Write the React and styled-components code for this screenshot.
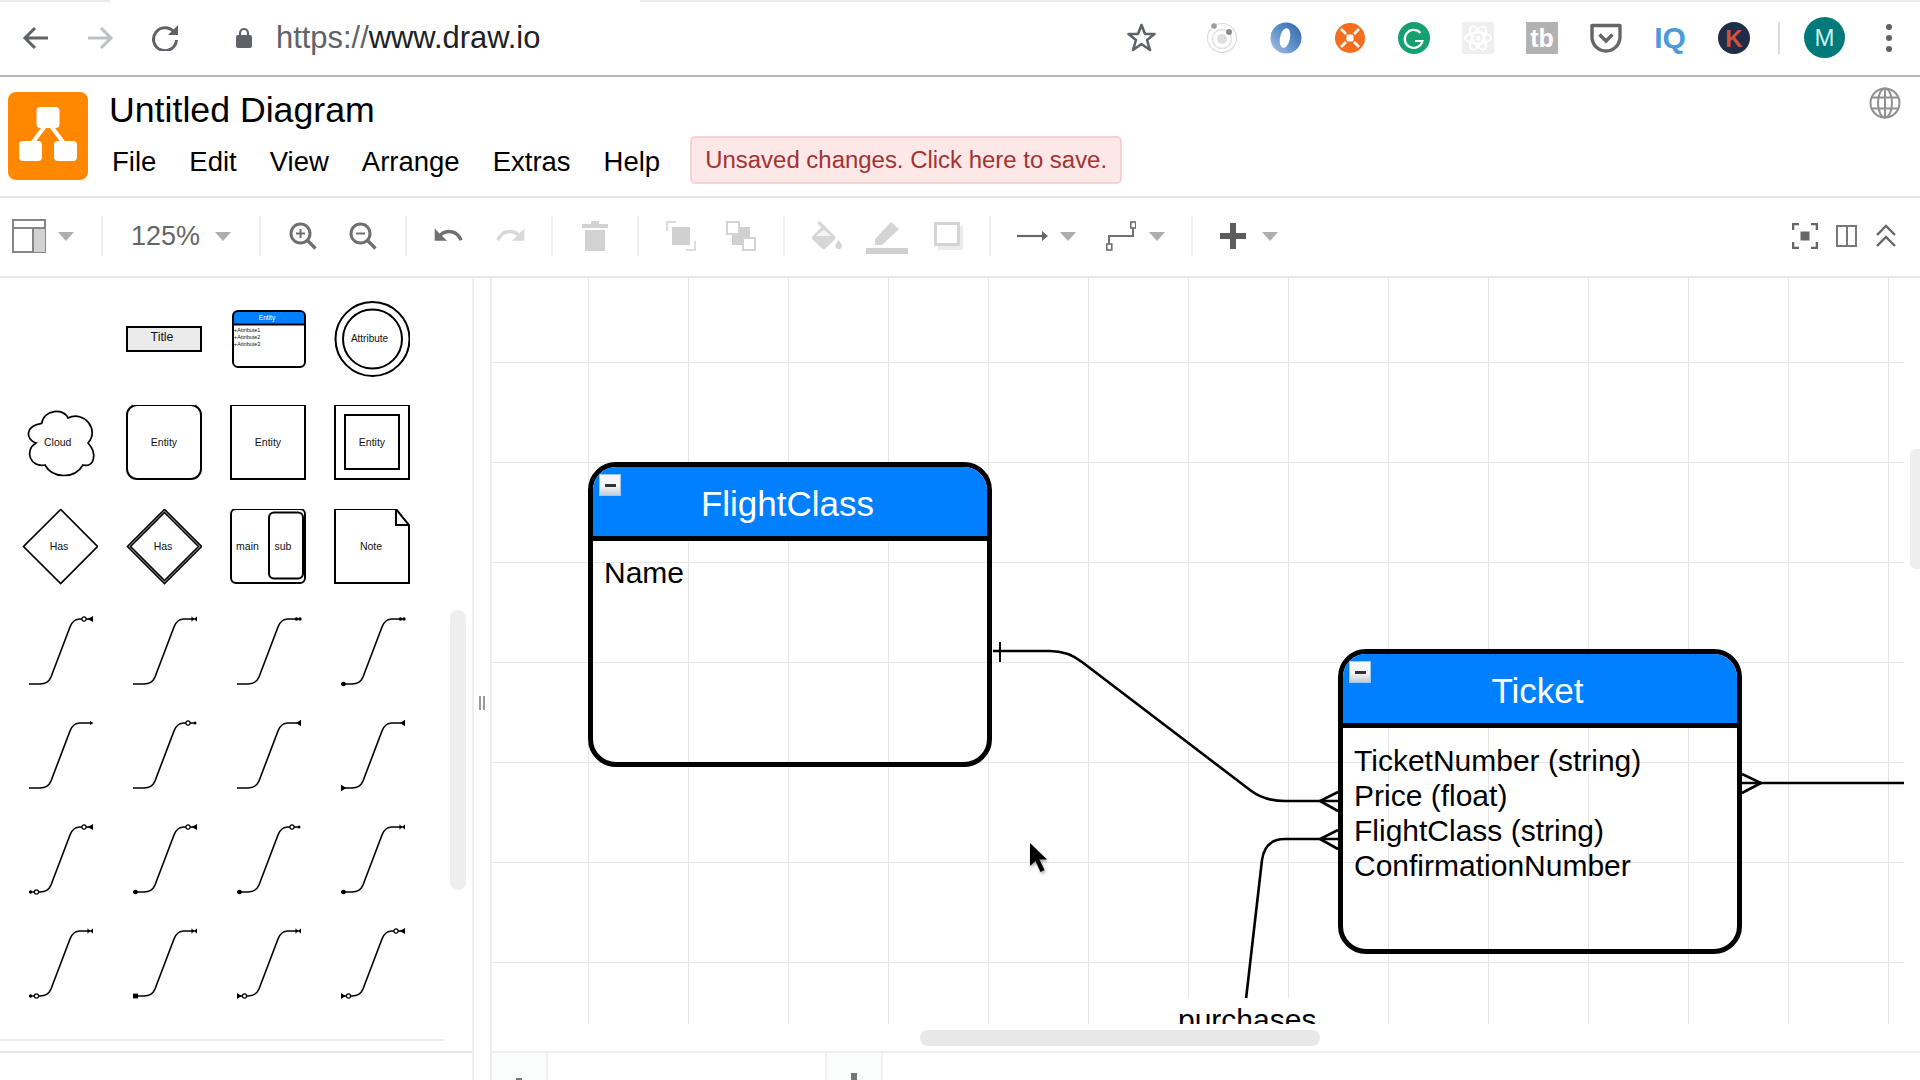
import React from "react";
import styled, { createGlobalStyle } from "styled-components";

const GlobalStyle = createGlobalStyle`
  html, body {
    margin: 0;
    padding: 0;
    background: #ffffff;
    font-family: "Liberation Sans", Arial, sans-serif;
  }
`;

const SHAPE_FONT = "Liberation Sans, Arial, sans-serif";

/* browser chrome */
const Page = styled.div`
  width: 1920px;
  height: 1080px;
  overflow: hidden;
  display: flex;
  flex-direction: column;
  background: #ffffff;
`;

const TabStrip = styled.div`
  height: 2px;
  background: #e8eaed;
  padding-left: 110px;
`;

const ActiveTab = styled.div`
  width: 530px;
  height: 2px;
  background: #ffffff;
`;

const BrowserBar = styled.div`
  height: 75px;
  box-sizing: border-box;
  border-bottom: 2px solid #b8b8b8;
  display: flex;
  align-items: center;
  padding: 0 28px 2px 22px;
`;

const NavIcon = styled.svg`
  display: block;
  flex: none;
  margin-left: ${(p) => p.$ml || 0}px;
`;

const Url = styled.div`
  margin-left: 24px;
  font-size: 30.9px;
  color: #5f6368;
  white-space: nowrap;
`;

const UrlHost = styled.span`
  color: #202124;
`;

const Extensions = styled.div`
  margin-left: auto;
  display: flex;
  align-items: center;
`;

const ExtIcon = styled.svg`
  display: block;
  flex: none;
  width: 32px;
  height: 32px;
  margin-left: 32px;
`;

const ChromeSep = styled.div`
  width: 2px;
  height: 32px;
  background: #dadce0;
  margin-left: 28px;
`;

const Avatar = styled.div`
  width: 41px;
  height: 41px;
  border-radius: 50%;
  background: #00797a;
  color: #c9f0ee;
  font-size: 24px;
  display: flex;
  align-items: center;
  justify-content: center;
  margin-left: 24px;
`;

const Dots = styled.div`
  display: flex;
  flex-direction: column;
  gap: 5px;
  margin-left: 41px;
`;

const Dot = styled.div`
  width: 6px;
  height: 6px;
  border-radius: 50%;
  background: #5f6368;
`;

/* draw.io header */
const AppHeader = styled.div`
  height: 121px;
  box-sizing: border-box;
  border-bottom: 2px solid #e4e4e4;
  display: flex;
  align-items: flex-start;
  padding: 10px 19px 0 8px;
`;

const Logo = styled.svg`
  display: block;
  flex: none;
  width: 80px;
  height: 88px;
  margin-top: 5px;
`;

const TitleBlock = styled.div`
  margin-left: 21px;
  margin-top: 3px;
`;

const DocTitle = styled.div`
  font-size: 35.7px;
  line-height: 40px;
  color: #000000;
  white-space: nowrap;
`;

const MenuRow = styled.div`
  display: flex;
  align-items: center;
  gap: 33px;
  margin-top: 6px;
  padding-left: 3px;
`;

const MenuItem = styled.div`
  font-size: 27.5px;
  line-height: 32px;
  padding-top: 4px;
  color: #000000;
`;

const SaveBanner = styled.div`
  width: 432px;
  height: 48px;
  box-sizing: border-box;
  margin-left: -3px;
  background: #fde8e7;
  border: 2px solid #f6d3d2;
  border-radius: 5px;
  color: #a33232;
  font-size: 23.95px;
  display: flex;
  align-items: center;
  justify-content: center;
  white-space: nowrap;
`;

const Globe = styled.svg`
  display: block;
  flex: none;
  margin-left: auto;
`;

/* toolbar */
const Toolbar = styled.div`
  height: 80px;
  box-sizing: border-box;
  border-bottom: 2px solid #e8e8e8;
  padding-bottom: 2px;
  display: flex;
  align-items: center;
`;

const ToolGroup = styled.div`
  width: ${(p) => p.$w}px;
  flex: none;
  display: flex;
  align-items: center;
  justify-content: ${(p) => (p.$start ? "flex-start" : "center")};
  gap: ${(p) => p.$gap || 0}px;
  padding-left: ${(p) => p.$pl || 0}px;
  box-sizing: border-box;
`;

const ToolSep = styled.div`
  width: 2px;
  height: 40px;
  flex: none;
  background: #eeeeee;
`;

const ToolIcon = styled.svg`
  display: block;
  flex: none;
  margin-left: ${(p) => p.$ml || 0}px;
`;

const ZoomLabel = styled.div`
  font-size: 27px;
  color: #666666;
`;

const ToolRight = styled.div`
  margin-left: auto;
  padding-right: 23px;
  display: flex;
  align-items: center;
  gap: 18px;
`;

/* body */
const Main = styled.div`
  flex: 1;
  display: flex;
  min-height: 0;
`;

const Sidebar = styled.div`
  width: 474px;
  flex: none;
  box-sizing: border-box;
  border-right: 2px solid #eeeeee;
  display: flex;
  flex-direction: column;
  position: relative;
`;

const ShapeGrid = styled.div`
  flex: 1;
  display: grid;
  grid-template-columns: repeat(4, 104px);
  grid-auto-rows: 104px;
  padding: 23px 0 0 22px;
`;

const ShapeSvg = styled.svg`
  display: block;
  width: 76px;
  height: 76px;
`;

const SideScroll = styled.div`
  position: absolute;
  left: 450px;
  top: 332px;
  width: 16px;
  height: 280px;
  border-radius: 8px;
  background: #eeeeee;
`;

const RuleShort = styled.div`
  width: 444px;
  height: 2px;
  background: #eeeeee;
  margin-bottom: 10px;
`;

const RuleFull = styled.div`
  height: 2px;
  background: #e8e8e8;
  margin-bottom: 27px;
`;

const Splitter = styled.div`
  width: 16px;
  flex: none;
  box-sizing: border-box;
  padding-top: 418px;
  display: flex;
  justify-content: center;
  gap: 2px;
`;

const Grip = styled.div`
  width: 2px;
  height: 14px;
  background: #9a9a9a;
`;

const Workspace = styled.div`
  flex: 1;
  min-width: 0;
  border-left: 2px solid #eeeeee;
  display: flex;
  flex-direction: column;
`;

const CanvasRow = styled.div`
  height: 746px;
  display: flex;
`;

const Canvas = styled.div`
  width: 1412px;
  height: 746px;
  flex: none;
  position: relative;
  overflow: hidden;
  background-color: #ffffff;
  background-image: linear-gradient(to right, #e6e6e6 1px, transparent 1px),
    linear-gradient(to bottom, #e6e6e6 1px, transparent 1px);
  background-size: 100px 100px;
  background-position: 96px 84px;
`;

const VScrollTrack = styled.div`
  flex: 1;
  padding-top: 171px;
  display: flex;
  justify-content: flex-end;
`;

const VThumb = styled.div`
  width: 10px;
  height: 120px;
  background: #eeeeee;
  border-radius: 6px 0 0 6px;
`;

const HScrollTrack = styled.div`
  height: 27px;
  box-sizing: border-box;
  padding: 6px 0 0 428px;
`;

const HThumb = styled.div`
  width: 400px;
  height: 16px;
  border-radius: 8px;
  background: #e8e8e8;
`;

const TabBar = styled.div`
  flex: 1;
  border-top: 2px solid #eeeeee;
  display: flex;
  background: #ffffff;
`;

const TabCell = styled.div`
  width: ${(p) => p.$w}px;
  flex: none;
  box-sizing: border-box;
  background: ${(p) => (p.$tinted ? "#fbfcfc" : "#ffffff")};
  border-right: ${(p) => (p.$tinted ? "2px solid #eef0f0" : "none")};
  border-left: ${(p) => (p.$left ? "2px solid #eef0f0" : "none")};
  display: flex;
  justify-content: center;
  align-items: flex-end;
`;

const TabGlyph = styled.div`
  width: 6px;
  height: ${(p) => p.$h}px;
  background: #777777;
`;

/* diagram */
const Links = styled.svg`
  position: absolute;
  left: 0;
  top: 0;
  width: 1412px;
  height: 746px;
`;

const Entity = styled.div`
  position: absolute;
  left: ${(p) => p.$x}px;
  top: ${(p) => p.$y}px;
  width: 404px;
  height: 305px;
  box-sizing: border-box;
  border: 5px solid #000000;
  border-radius: 28px;
  overflow: hidden;
`;

const EntityHead = styled.div`
  height: 74px;
  box-sizing: border-box;
  border-bottom: 5px solid #000000;
  background: #0080ff;
  color: #ffffff;
  font-size: 35px;
  padding: 4px 5px 0 0;
  display: flex;
  align-items: center;
  justify-content: center;
  position: relative;
`;

const Collapse = styled.div`
  position: absolute;
  left: 6px;
  top: 7px;
  width: 22px;
  height: 22px;
  box-sizing: border-box;
  border: 1px solid #9cc6ee;
  background: linear-gradient(#f4f6f8 55%, #c3ccd6);
  display: flex;
  align-items: center;
  justify-content: center;
`;

const CollapseBar = styled.div`
  width: 11px;
  height: 3px;
  background: #333333;
`;

const EntityBody = styled.div`
  padding: ${(p) => p.$top}px 0 0 11px;
  font-size: 30px;
  line-height: 35px;
  color: #000000;
  white-space: nowrap;
`;

const LinkLabel = styled.div`
  position: absolute;
  left: 686px;
  top: 720px;
  padding-top: 4px;
  background: #ffffff;
  font-size: 30px;
  line-height: 35px;
  color: #000000;
`;

const Pointer = styled.svg`
  position: absolute;
  left: 537px;
  top: 564px;
  filter: drop-shadow(1px 2px 1.5px rgba(0, 0, 0, 0.35));
`;

const Caret = ({ ml }) => (
  <ToolIcon $ml={ml} width="16" height="9" viewBox="0 0 16 9">
    <path d="M0 0H16L8 9Z" fill="#adadad" />
  </ToolIcon>
);

const endMarks = {
  tip: <path d="M68 4L71.5 6L68 8Z" />,
  tri: <path d="M66 6L71 2.8V9.2Z" />,
  bow: <path d="M65.5 3.2L71 8.8V3.2L65.5 8.8Z" />,
  dd: (
    <>
      <circle cx="66.5" cy="6" r="1.7" />
      <circle cx="70" cy="6" r="1.7" />
    </>
  ),
  circTri: (
    <>
      <circle cx="62" cy="6" r="2.1" fill="#fff" stroke="#000" strokeWidth="1.2" />
      <path d="M65.5 6L71 3V9Z" />
    </>
  ),
  circTip: (
    <>
      <circle cx="62" cy="6" r="2.1" fill="#fff" stroke="#000" strokeWidth="1.2" />
      <circle cx="69" cy="6" r="1.5" />
    </>
  ),
};

const startMarks = {
  dot: <circle cx="9.5" cy="71" r="2.3" />,
  block: <rect x="7" y="68.6" width="5" height="4.8" />,
  tri: <path d="M7 67.8L12.5 71L7 74.2Z" />,
  tipCirc: (
    <>
      <circle cx="8.5" cy="71" r="1.7" />
      <circle cx="14.5" cy="71" r="2.1" fill="#fff" stroke="#000" strokeWidth="1.2" />
    </>
  ),
  triCirc: (
    <>
      <path d="M7 68L11.5 71L7 74Z" />
      <circle cx="14.5" cy="71" r="2.1" fill="#fff" stroke="#000" strokeWidth="1.2" />
    </>
  ),
};

const connectors = [
  ["", "circTri"],
  ["", "bow"],
  ["", "dd"],
  ["dot", "dd"],
  ["", "tip"],
  ["", "circTip"],
  ["", "tri"],
  ["tri", "tri"],
  ["tipCirc", "circTri"],
  ["dot", "circTri"],
  ["dot", "circTip"],
  ["dot", "bow"],
  ["tipCirc", "bow"],
  ["block", "bow"],
  ["triCirc", "bow"],
  ["triCirc", "circTri"],
];

const Connector = ({ start, end }) => (
  <ShapeSvg viewBox="0 0 76 76">
    <path d="M7 71H18Q26 71 29 64L48 14Q51 6 58 6H70" fill="none" stroke="#000" strokeWidth="1.6" />
    {startMarks[start]}
    {endMarks[end]}
  </ShapeSvg>
);

const Label = ({ x, y, size = 10.5, fill = "#111", children, anchor = "middle" }) => (
  <text x={x} y={y} fontSize={size} fill={fill} textAnchor={anchor} fontFamily={SHAPE_FONT}>
    {children}
  </text>
);

const line = { fill: "none", stroke: "#000", strokeWidth: 2 };

// rows two and three sit one pixel higher than the grid pitch gives
const RAISED = "0 1 76 76";

const Shapes = () => (
  <>
    <ShapeSvg viewBox="0 0 76 76" />
    <ShapeSvg viewBox="0 0 76 76">
      <rect x="1" y="26" width="74" height="24" fill="#ebebeb" stroke="#000" strokeWidth="2" />
      <Label x="36" y="40" size={12.3}>Title</Label>
    </ShapeSvg>
    <ShapeSvg viewBox="0 0 76 76">
      <path d="M3 23V14Q3 10 8 10H70Q75 10 75 14V23Z" fill="#0080ff" />
      <rect x="3" y="10" width="72" height="56" rx="5" {...line} />
      <path d="M3 23.5H75" {...line} />
      <Label x="37" y="18.5" size={6.6} fill="#fff">Entity</Label>
      <Label x="4" y="31" size={5.4} anchor="start">+Attribute1</Label>
      <Label x="4" y="38" size={5.4} anchor="start">+Attribute2</Label>
      <Label x="4" y="44.5" size={5.4} anchor="start">+Attribute3</Label>
    </ShapeSvg>
    <ShapeSvg viewBox="0 0 76 76">
      <circle cx="38.5" cy="38" r="37" {...line} />
      <circle cx="38.5" cy="38" r="29.5" {...line} />
      <Label x="35.5" y="41" size={10}>Attribute</Label>
    </ShapeSvg>

    <ShapeSvg viewBox={RAISED}>
      <path
        d="M14 39C4 36 2 22 19.7 19.3C22 5 42 4 46 14C62 6 78 26 66 39C76 50 72 64 61 61C52 76 30 74 23 61C8 64 2 46 14 39Z"
        {...line}
        strokeWidth="1.7"
      />
      <Label x="35.7" y="42">Cloud</Label>
    </ShapeSvg>
    <ShapeSvg viewBox={RAISED}>
      <rect x="1" y="1" width="74" height="74" rx="10" {...line} />
      <Label x="38" y="42">Entity</Label>
    </ShapeSvg>
    <ShapeSvg viewBox={RAISED}>
      <rect x="1" y="1" width="74" height="74" {...line} />
      <Label x="38" y="42">Entity</Label>
    </ShapeSvg>
    <ShapeSvg viewBox={RAISED}>
      <rect x="1" y="1" width="74" height="74" {...line} />
      <rect x="11" y="11" width="54" height="54" {...line} />
      <Label x="38" y="42">Entity</Label>
    </ShapeSvg>

    <ShapeSvg viewBox={RAISED}>
      <path d="M38.7 1.5L75.5 38.5L38.7 75.5L1.5 38.5Z" {...line} strokeWidth="1.7" />
      <Label x="37" y="42">Has</Label>
    </ShapeSvg>
    <ShapeSvg viewBox={RAISED}>
      <path d="M38.5 1.5L75.5 38.5L38.5 75.5L1.5 38.5Z" {...line} strokeWidth="1.7" />
      <path d="M38.5 4.5L72.5 38.5L38.5 72.5L4.5 38.5Z" {...line} strokeWidth="1.7" />
      <Label x="37" y="42">Has</Label>
    </ShapeSvg>
    <ShapeSvg viewBox={RAISED}>
      <rect x="1" y="1" width="74" height="74" rx="5" {...line} />
      <rect x="39" y="4.5" width="34" height="66" rx="5" {...line} />
      <Label x="17.5" y="42">main</Label>
      <Label x="53" y="42">sub</Label>
    </ShapeSvg>
    <ShapeSvg viewBox={RAISED}>
      <path d="M1 1H62L75 17V75H1Z" {...line} />
      <path d="M62 1V17H75" {...line} />
      <Label x="37" y="42">Note</Label>
    </ShapeSvg>

    {connectors.map(([start, end], i) => (
      <Connector key={i} start={start} end={end} />
    ))}
  </>
);

const LayoutIcon = () => (
  <ToolIcon width="34" height="34" viewBox="0 0 34 34">
    <rect x="1" y="1" width="32" height="32" fill="#fff" stroke="#858585" strokeWidth="2" />
    <rect x="21" y="9" width="12" height="24" fill="#d2d2d2" />
    <path d="M1 9H33M21 9V33" stroke="#858585" strokeWidth="2" />
  </ToolIcon>
);

const Magnifier = ({ plus }) => (
  <ToolIcon width="28" height="28" viewBox="0 0 28 28">
    <circle cx="11.5" cy="11.5" r="9.5" fill="none" stroke="#707070" strokeWidth="3" />
    <path d="M18.5 18.5L26.5 26.5" stroke="#707070" strokeWidth="3.4" />
    <path d={plus ? "M7 11.5H16M11.5 7V16" : "M7 11.5H16"} stroke="#707070" strokeWidth="2" />
  </ToolIcon>
);

const UNDO =
  "M12.5 8c-2.65 0-5.05.99-6.9 2.6L2 7v9h9l-3.62-3.62c1.39-1.16 3.16-1.88 5.12-1.88 3.54 0 6.55 2.31 7.6 5.5l2.37-.78C21.08 11.03 17.15 8 12.5 8z";

export default function App() {
  return (
    <Page>
      <GlobalStyle />
      <TabStrip>
        <ActiveTab />
      </TabStrip>
      <BrowserBar>
        <NavIcon width="27" height="24" viewBox="0 0 27 24">
          <path d="M26 12H3M13 2L3 12L13 22" fill="none" stroke="#5f6368" strokeWidth="3" />
        </NavIcon>
        <NavIcon $ml={38} width="27" height="24" viewBox="0 0 27 24">
          <path d="M1 12H24M14 2L24 12L14 22" fill="none" stroke="#bdc1c6" strokeWidth="3" />
        </NavIcon>
        <NavIcon $ml={37} width="28" height="26" viewBox="0 0 28 26">
          <path d="M23 7A11.5 11.5 0 1 0 25.5 15" fill="none" stroke="#5f6368" strokeWidth="3" />
          <path d="M17 10H27V0Z" fill="#5f6368" />
        </NavIcon>
        <NavIcon $ml={57} width="16" height="21" viewBox="0 0 16 21">
          <path d="M4 9V6A4 4 0 0 1 12 6V9" fill="none" stroke="#5f6368" strokeWidth="2.2" />
          <rect x="0" y="8" width="16" height="13" rx="2" fill="#5f6368" />
        </NavIcon>
        <Url>
          https://<UrlHost>www.draw.io</UrlHost>
        </Url>
        <Extensions>
          <NavIcon width="29" height="29" viewBox="0 0 29 29">
            <path
              d="M14.5 2L18 11H27.5L20 17L23 27L14.5 21L6 27L9 17L1.5 11H11Z"
              fill="none"
              stroke="#5f6368"
              strokeWidth="2.6"
              strokeLinejoin="round"
            />
          </NavIcon>
          <ExtIcon viewBox="0 0 32 32" style={{ marginLeft: 50 }}>
            <circle cx="16" cy="16" r="14.5" fill="none" stroke="#dddddd" strokeWidth="1.2" />
            <circle cx="16" cy="17" r="9.5" fill="none" stroke="#e2e2e2" strokeWidth="1.5" />
            <circle cx="16" cy="17" r="5" fill="#dedede" />
            <circle cx="8" cy="4" r="2.8" fill="#9a9a9a" />
            <circle cx="23" cy="10" r="3" fill="#8c8c8c" />
          </ExtIcon>
          <ExtIcon viewBox="0 0 32 32">
            <defs>
              <linearGradient id="swirl" x1="0" y1="1" x2="1" y2="0">
                <stop offset="0" stopColor="#a9c5e8" />
                <stop offset="0.5" stopColor="#5f8fc8" />
                <stop offset="1" stopColor="#2f62a8" />
              </linearGradient>
            </defs>
            <circle cx="16" cy="16" r="15.5" fill="url(#swirl)" />
            <ellipse cx="15" cy="16" rx="5" ry="10" fill="#ffffff" transform="rotate(12 15 16)" />
          </ExtIcon>
          <ExtIcon viewBox="0 0 32 32">
            <circle cx="16" cy="16" r="15" fill="#f36f1f" />
            <rect x="12.5" y="12.5" width="7" height="7" rx="1.5" fill="#fff" />
            <path d="M7 7L12 12M25 7L20 12M7 25L12 20M25 25L20 20" stroke="#fff" strokeWidth="2.6" />
          </ExtIcon>
          <ExtIcon viewBox="0 0 32 32">
            <circle cx="16" cy="16" r="16" fill="#15a06f" />
            <path d="M22.5 11A9 9 0 1 0 24.5 19H17" fill="none" stroke="#fff" strokeWidth="2.2" />
          </ExtIcon>
          <ExtIcon viewBox="0 0 32 32">
            <rect width="32" height="32" rx="3" fill="#efefef" />
            <g fill="none" stroke="#ffffff" strokeWidth="1.8">
              <ellipse cx="16" cy="16" rx="13" ry="5.5" />
              <ellipse cx="16" cy="16" rx="13" ry="5.5" transform="rotate(60 16 16)" />
              <ellipse cx="16" cy="16" rx="13" ry="5.5" transform="rotate(120 16 16)" />
            </g>
            <circle cx="16" cy="16" r="2.5" fill="#fff" />
          </ExtIcon>
          <ExtIcon viewBox="0 0 32 32">
            <rect width="32" height="32" fill="#b2b2b2" />
            <text x="16" y="25" fontSize="25" fontWeight="700" fill="#fff" textAnchor="middle" fontFamily={SHAPE_FONT}>
              tb
            </text>
          </ExtIcon>
          <ExtIcon viewBox="0 0 32 32">
            <path
              d="M2 3.5H30V15A14 14 0 0 1 2 15Z"
              fill="none"
              stroke="#666666"
              strokeWidth="3.4"
              strokeLinejoin="round"
            />
            <path d="M9.5 12.5L16 19L22.5 12.5" fill="none" stroke="#666666" strokeWidth="3.4" />
          </ExtIcon>
          <ExtIcon viewBox="0 0 32 32">
            <text x="16" y="26" fontSize="30" fontWeight="700" fill="#4a9ade" textAnchor="middle" fontFamily={SHAPE_FONT}>
              IQ
            </text>
          </ExtIcon>
          <ExtIcon viewBox="0 0 32 32">
            <circle cx="16" cy="16" r="16" fill="#1f2d46" />
            <text x="16" y="25" fontSize="24" fontWeight="700" fill="#cf5240" textAnchor="middle" fontFamily={SHAPE_FONT}>
              K
            </text>
          </ExtIcon>
          <ChromeSep />
          <Avatar>M</Avatar>
          <Dots>
            <Dot />
            <Dot />
            <Dot />
          </Dots>
        </Extensions>
      </BrowserBar>

      <AppHeader>
        <Logo viewBox="0 0 80 88">
          <rect width="80" height="88" rx="8" fill="#ff8800" />
          <path d="M40 30L22 54M40 30L58 54" stroke="#fff" strokeWidth="4" />
          <rect x="28.5" y="15" width="23" height="21" rx="4" fill="#fff" />
          <rect x="11" y="49" width="23" height="20" rx="4" fill="#fff" />
          <rect x="46" y="49" width="23" height="20" rx="4" fill="#fff" />
        </Logo>
        <TitleBlock>
          <DocTitle>Untitled Diagram</DocTitle>
          <MenuRow>
            <MenuItem>File</MenuItem>
            <MenuItem>Edit</MenuItem>
            <MenuItem>View</MenuItem>
            <MenuItem>Arrange</MenuItem>
            <MenuItem>Extras</MenuItem>
            <MenuItem>Help</MenuItem>
            <SaveBanner>Unsaved changes. Click here to save.</SaveBanner>
          </MenuRow>
        </TitleBlock>
        <Globe width="32" height="32" viewBox="0 0 32 32">
          <g fill="none" stroke="#909090" strokeWidth="2">
            <circle cx="16" cy="16" r="14.5" />
            <ellipse cx="16" cy="16" rx="7" ry="14.5" />
            <path d="M16 1.5V30.5M3 10.5H29M3 21.5H29" />
          </g>
        </Globe>
      </AppHeader>

      <Toolbar>
        <ToolGroup $w={101} $start $pl={12} $gap={12}>
          <LayoutIcon />
          <Caret />
        </ToolGroup>
        <ToolSep />
        <ToolGroup $w={156} $gap={15}>
          <ZoomLabel>125%</ZoomLabel>
          <Caret />
        </ToolGroup>
        <ToolSep />
        <ToolGroup $w={144} $gap={32}>
          <Magnifier plus />
          <Magnifier />
        </ToolGroup>
        <ToolSep />
        <ToolGroup $w={144} $gap={31}>
          <ToolIcon width="30" height="18" viewBox="1.5 6.5 22 12">
            <path d={UNDO} fill="#707070" />
          </ToolIcon>
          <ToolIcon width="30" height="18" viewBox="1.5 6.5 22 12" style={{ transform: "scaleX(-1)" }}>
            <path d={UNDO} fill="#d8d8d8" />
          </ToolIcon>
        </ToolGroup>
        <ToolSep />
        <ToolGroup $w={84}>
          <ToolIcon width="26" height="30" viewBox="0 0 26 30">
            <path d="M0 3H9V0H17V3H26V7H0ZM3 9H23V30H3Z" fill="#d2d2d2" />
          </ToolIcon>
        </ToolGroup>
        <ToolSep />
        <ToolGroup $w={144} $gap={30}>
          <ToolIcon width="30" height="30" viewBox="0 0 30 30">
            <path d="M1 10V1H10M29 20V29H20" fill="none" stroke="#dcdcdc" strokeWidth="2" />
            <rect x="6" y="6" width="18" height="18" fill="#d0d0d0" />
          </ToolIcon>
          <ToolIcon width="30" height="30" viewBox="0 0 30 30">
            <rect x="6" y="6" width="18" height="18" fill="#d0d0d0" />
            <rect x="1" y="1" width="12" height="12" fill="#fff" stroke="#d4d4d4" strokeWidth="2" />
            <rect x="17" y="17" width="12" height="12" fill="#fff" stroke="#d4d4d4" strokeWidth="2" />
          </ToolIcon>
        </ToolGroup>
        <ToolSep />
        <ToolGroup $w={204}>
          <ToolIcon width="32" height="30" viewBox="2.4 0 19.2 18">
            <path
              d="M16.56 8.94L7.62 0 6.21 1.41l2.38 2.38-5.15 5.15c-.59.59-.59 1.54 0 2.12l5.5 5.5c.29.29.68.44 1.06.44s.77-.15 1.06-.44l5.5-5.5c.59-.58.59-1.53 0-2.11zM19 11.5s-2 2.17-2 3.5c0 1.1.9 2 2 2s2-.9 2-2c0-1.33-2-3.5-2-3.5z"
              fill="#d6d6d6"
            />
            <path d="M10 5.21L14.79 9H5.21Z" fill="#f4f4f4" />
          </ToolIcon>
          <ToolIcon $ml={23} width="42" height="36" viewBox="0 0 42 36">
            <path d="M9 21L25 4L33 11L16 27H9Z" fill="#d4d4d4" />
            <rect x="0" y="30" width="42" height="6" fill="#d0d0d0" />
          </ToolIcon>
          <ToolIcon $ml={26} width="29" height="28" viewBox="0 0 29 28">
            <rect x="4" y="4" width="25" height="24" fill="#ececec" />
            <rect x="1.5" y="1.5" width="23" height="21" fill="#fff" stroke="#d4d4d4" strokeWidth="3" />
          </ToolIcon>
        </ToolGroup>
        <ToolSep />
        <ToolGroup $w={200}>
          <ToolIcon width="31" height="12" viewBox="0 0 31 12">
            <path d="M0 6H27" stroke="#666" strokeWidth="2.2" />
            <path d="M25 1L31 6L25 11Z" fill="#666" />
          </ToolIcon>
          <Caret ml={12} />
          <ToolIcon $ml={30} width="30" height="30" viewBox="0 0 30 30">
            <path d="M3 25V15H27V5" fill="none" stroke="#707070" strokeWidth="2" />
            <rect x="0.8" y="23" width="5" height="6" fill="#fff" stroke="#707070" strokeWidth="1.6" />
            <rect x="24.8" y="1" width="5" height="6" fill="#fff" stroke="#707070" strokeWidth="1.6" />
          </ToolIcon>
          <Caret ml={13} />
        </ToolGroup>
        <ToolSep />
        <ToolGroup $w={120} $start $pl={27} $gap={16}>
          <ToolIcon width="26" height="26" viewBox="0 0 26 26">
            <path d="M10 0H16V10H26V16H16V26H10V16H0V10H10Z" fill="#5c5c5c" />
          </ToolIcon>
          <Caret />
        </ToolGroup>
        <ToolRight>
          <ToolIcon width="26" height="26" viewBox="0 0 26 26">
            <path d="M1 7V1H7M19 1H25V7M25 19V25H19M7 25H1V19" fill="none" stroke="#666" strokeWidth="2.6" />
            <rect x="8.5" y="8.5" width="9" height="9" fill="#666" />
          </ToolIcon>
          <ToolIcon width="21" height="22" viewBox="0 0 21 22">
            <rect x="1" y="1" width="19" height="20" fill="none" stroke="#777" strokeWidth="2" />
            <path d="M11 1V21" stroke="#777" strokeWidth="2" />
          </ToolIcon>
          <ToolIcon width="22" height="24" viewBox="0 0 22 24">
            <path d="M2 11L11 2L20 11M2 22L11 13L20 22" fill="none" stroke="#666" strokeWidth="2.4" />
          </ToolIcon>
        </ToolRight>
      </Toolbar>

      <Main>
        <Sidebar>
          <ShapeGrid>
            <Shapes />
          </ShapeGrid>
          <SideScroll />
          <RuleShort />
          <RuleFull />
        </Sidebar>
        <Splitter>
          <Grip />
          <Grip />
        </Splitter>
        <Workspace>
          <CanvasRow>
            <Canvas>
              <Links viewBox="492 278 1412 746">
                <g fill="none" stroke="#000" strokeWidth="2.6">
                  <path d="M993 651H1050Q1068 651 1082 662L1250 790Q1264 801 1285 801H1338" />
                  <path d="M1000 642V662" strokeWidth="2" />
                  <path d="M1338 792L1320 801L1338 811" />
                  <path d="M1246 999L1262 860Q1265 839 1285 839H1338" />
                  <path d="M1338 830L1320 839L1338 849" />
                  <path d="M1742 774L1761 783L1742 793" />
                  <path d="M1742 783H1904" />
                </g>
              </Links>
              <Entity $x={96} $y={184}>
                <EntityHead>
                  <Collapse>
                    <CollapseBar />
                  </Collapse>
                  FlightClass
                </EntityHead>
                <EntityBody $top={14}>Name</EntityBody>
              </Entity>
              <Entity $x={846} $y={371}>
                <EntityHead>
                  <Collapse>
                    <CollapseBar />
                  </Collapse>
                  Ticket
                </EntityHead>
                <EntityBody $top={15}>
                  <div>TicketNumber (string)</div>
                  <div>Price (float)</div>
                  <div>FlightClass (string)</div>
                  <div>ConfirmationNumber</div>
                </EntityBody>
              </Entity>
              <LinkLabel>purchases</LinkLabel>
              <Pointer width="20" height="32" viewBox="0 0 20 32">
                <path d="M1 1V24L6.5 19L11.5 30L15.5 28L10.5 17.5H18Z" fill="#000" />
              </Pointer>
            </Canvas>
            <VScrollTrack>
              <VThumb />
            </VScrollTrack>
          </CanvasRow>
          <HScrollTrack>
            <HThumb />
          </HScrollTrack>
          <TabBar>
            <TabCell $w={56} $tinted>
              <TabGlyph $h={2} />
            </TabCell>
            <TabCell $w={277} />
            <TabCell $w={58} $tinted $left>
              <TabGlyph $h={7} />
            </TabCell>
          </TabBar>
        </Workspace>
      </Main>
    </Page>
  );
}
